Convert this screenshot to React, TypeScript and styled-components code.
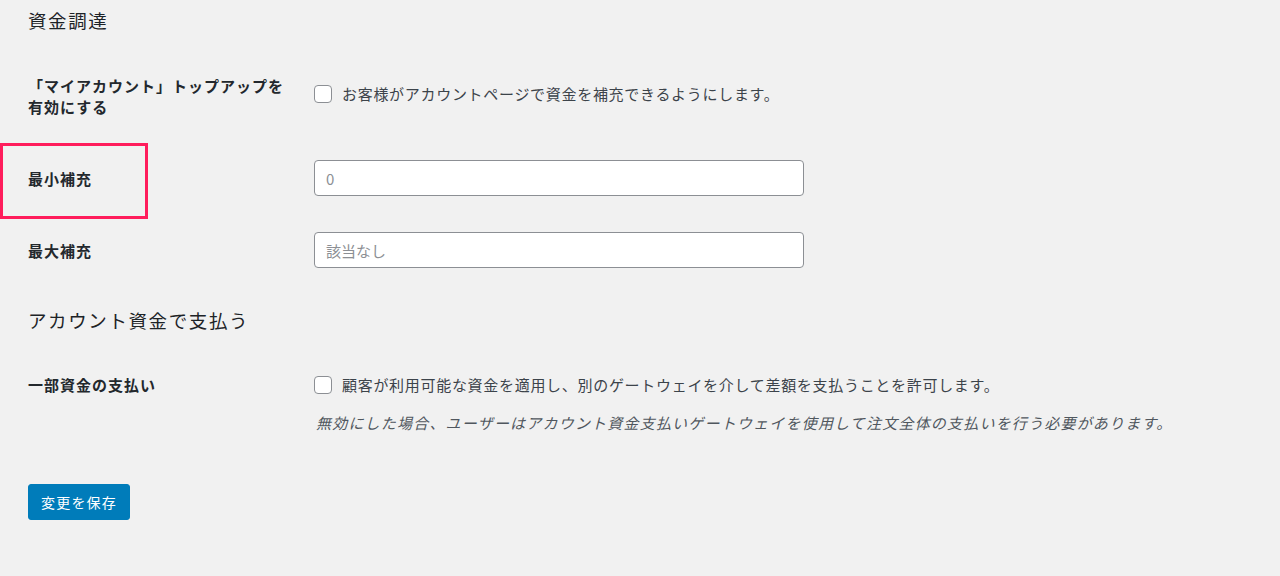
import React from "react";
import styled, { createGlobalStyle } from "styled-components";

const Global = createGlobalStyle`
  html, body { margin: 0; padding: 0; background: #f1f1f1; }
  body { font-family: "Noto Sans CJK JP", "Noto Sans", sans-serif; color: #23282d; }
`;

const Page = styled.div`
  padding: 8px 0 40px 28px;
  min-height: 576px;
  box-sizing: border-box;
`;

const Heading = styled.h2<{ $mt?: number }>`
  margin: ${(p) => p.$mt ?? 0}px 0 0;
  font-size: 18.5px;
  line-height: 24px;
  font-weight: 400;
  letter-spacing: 1.6px;
  color: #1d2327;
`;

const Row = styled.div<{ $mt: number; $center?: boolean }>`
  display: grid;
  grid-template-columns: 286px 1fr;
  margin-top: ${(p) => p.$mt}px;
  align-items: ${(p) => (p.$center ? "center" : "start")};
`;

const Label = styled.div`
  position: relative;
  width: 270px;
  font-size: 15px;
  line-height: 21px;
  font-weight: 600;
  letter-spacing: 1px;
  color: #23282d;
`;

const Highlight = styled.div`
  position: absolute;
  left: -28px;
  top: -25px;
  width: 148px;
  height: 76px;
  box-sizing: border-box;
  border: 3px solid #ff1d5c;
  pointer-events: none;
`;

const Field = styled.div`
  display: flex;
  flex-direction: column;
`;

const CheckLine = styled.label<{ $pt?: number }>`
  display: flex;
  align-items: center;
  gap: 10px;
  padding-top: ${(p) => p.$pt ?? 0}px;
  font-size: 15px;
  line-height: 21px;
  letter-spacing: 0.7px;
  color: #3c434a;
`;

const Box = styled.span`
  width: 18px;
  height: 18px;
  box-sizing: border-box;
  border: 1px solid #8c8f94;
  border-radius: 4px;
  background: #fff;
  flex: none;
`;

const Description = styled.p`
  margin: 17px 0 0 2px;
  font-size: 15px;
  line-height: 21px;
  letter-spacing: 1.2px;
  font-style: italic;
  color: #50575e;
`;

const Input = styled.input`
  width: 490px;
  height: 36px;
  box-sizing: border-box;
  border: 1px solid #8c8f94;
  border-radius: 4px;
  background: #fff;
  padding: 0 11px;
  font-family: "Noto Sans CJK JP", "Noto Sans", sans-serif;
  font-size: 15px;
  color: #2c3338;
  outline: none;
  &::placeholder { color: #8c8f94; }
`;

const SaveButton = styled.button`
  margin-top: 51px;
  height: 36px;
  padding: 0 12px;
  border: 1px solid #007cba;
  border-radius: 3px;
  background: #007cba;
  color: #fff;
  font-family: "Noto Sans CJK JP", "Noto Sans", sans-serif;
  font-size: 14px;
  letter-spacing: 1.2px;
  cursor: pointer;
`;

export default function App() {
  return (
    <>
      <Global />
      <Page>
        <Heading>資金調達</Heading>

        <Row $mt={43}>
          <Label>「マイアカウント」トップアップを有効にする</Label>
          <Field>
            <CheckLine $pt={8}>
              <Box />
              お客様がアカウントページで資金を補充できるようにします。
            </CheckLine>
          </Field>
        </Row>

        <Row $mt={43} $center>
          <Label>
            <Highlight />
            最小補充
          </Label>
          <Field>
            <Input placeholder="0" />
          </Field>
        </Row>

        <Row $mt={36} $center>
          <Label>最大補充</Label>
          <Field>
            <Input placeholder="該当なし" />
          </Field>
        </Row>

        <Heading $mt={40}>アカウント資金で支払う</Heading>

        <Row $mt={42}>
          <Label>一部資金の支払い</Label>
          <Field>
            <CheckLine>
              <Box />
              顧客が利用可能な資金を適用し、別のゲートウェイを介して差額を支払うことを許可します。
            </CheckLine>
            <Description>
              無効にした場合、ユーザーはアカウント資金支払いゲートウェイを使用して注文全体の支払いを行う必要があります。
            </Description>
          </Field>
        </Row>

        <SaveButton>変更を保存</SaveButton>
      </Page>
    </>
  );
}
